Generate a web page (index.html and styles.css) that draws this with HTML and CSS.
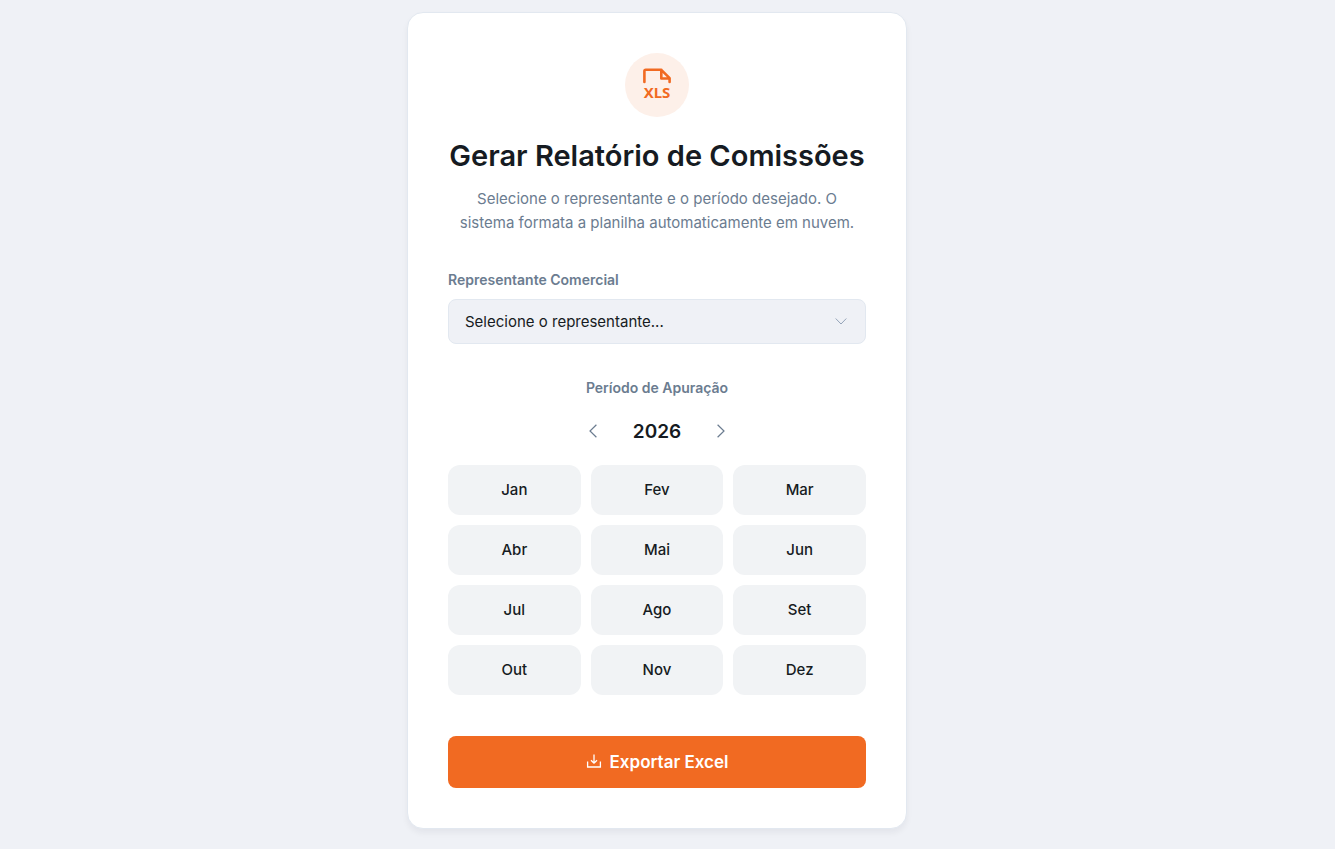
FILE: index.html
```html
<!DOCTYPE html>
<html lang="pt-BR">
<head>
<meta charset="utf-8">
<meta name="viewport" content="width=device-width, initial-scale=1">
<title>Gerar Relatório de Comissões</title>
<link rel="stylesheet" href="styles.css">
</head>
<body>
<main class="page">
  <form class="card">
    <div class="badge">
      <svg width="34" height="34" viewBox="0 0 34 34" aria-hidden="true">
        <path d="M4.400 14V3.200a1.400 1.400 0 0 1 1.400-1.400H21.300l8.300 8.300V14M21.300 1.800v8.700h8.300" fill="none" stroke="currentColor" stroke-width="2.600" stroke-linecap="round" stroke-linejoin="round"/>
        <text class="badge-text" x="17" y="30" text-anchor="middle">XLS</text>
      </svg>
    </div>
    <h1 class="title">Gerar Relatório de Comissões</h1>
    <p class="lead">Selecione o representante e o período desejado. O sistema formata a planilha automaticamente em nuvem.</p>

    <label class="label" for="rep">Representante Comercial</label>
    <div class="select-wrap">
      <select class="select" id="rep">
        <option>Selecione o representante...</option>
      </select>
      <svg class="caret" width="12" height="12" viewBox="0 0 12 12" aria-hidden="true"><path d="M.7 2.500 6 8 11.300 2.500" fill="none" stroke="currentColor"/></svg>
    </div>

    <fieldset class="period">
      <legend class="label period-label">Período de Apuração</legend>
      <div class="year-nav">
        <button class="arrow" type="button" aria-label="Ano anterior"><svg width="16" height="16" viewBox="0 0 16 16"><path d="M11.400 1.800 5 8l6.400 6.200" fill="none" stroke="currentColor" stroke-width="1.200"/></svg></button>
        <span class="year">2026</span>
        <button class="arrow" type="button" aria-label="Próximo ano"><svg width="16" height="16" viewBox="0 0 16 16"><path d="M4.600 1.800 11 8l-6.400 6.200" fill="none" stroke="currentColor" stroke-width="1.200"/></svg></button>
      </div>
      <div class="months">
        <button class="month" type="button">Jan</button>
        <button class="month" type="button">Fev</button>
        <button class="month" type="button">Mar</button>
        <button class="month" type="button">Abr</button>
        <button class="month" type="button">Mai</button>
        <button class="month" type="button">Jun</button>
        <button class="month" type="button">Jul</button>
        <button class="month" type="button">Ago</button>
        <button class="month" type="button">Set</button>
        <button class="month" type="button">Out</button>
        <button class="month" type="button">Nov</button>
        <button class="month" type="button">Dez</button>
      </div>
    </fieldset>

    <button class="export" type="button">
      <svg width="16" height="16" viewBox="0 0 16 16" aria-hidden="true"><path d="M1.600 7.500v5.500h12.800V7.500M8 .5v8.500M5 6.200 8 9.200 11 6.200" fill="none" stroke="currentColor" stroke-width="1.300"/></svg>
      Exportar Excel
    </button>
  </form>
</main>
</body>
</html>
```
FILE: styles.css
```css
* { box-sizing: border-box; }
body {
  margin: 0;
  background: #eff1f6;
  color: #161b22;
  font-family: Inter, sans-serif;
}
.page {
  display: flex;
  justify-content: center;
  padding: 12px 21px 20px 0;
}
.card {
  width: 100%;
  max-width: 500px;
  padding: 40px;
  background: #fff;
  border: 1px solid #e2e8f0;
  border-radius: 16px;
  box-shadow: 0 4px 6px rgba(15, 23, 42, 0.05);
}
.badge {
  display: flex;
  align-items: center;
  justify-content: center;
  width: 64px;
  height: 64px;
  margin: 0 auto 20px;
  border-radius: 50%;
  background: #fdf0e9;
  color: #f16a22;
}
.badge-text {
  font: 700 15px "Noto Sans", sans-serif;
  fill: currentColor;
}
.title {
  margin: 0 0 12px;
  font-size: 29px;
  font-weight: 600;
  line-height: 38px;
  text-align: center;
}
.lead {
  margin: 0 0 36px;
  color: #6b7c90;
  font-size: 15px;
  line-height: 24px;
  text-align: center;
}
.label {
  display: block;
  margin: 0 0 10px;
  padding: 0;
  color: #6b7c90;
  font-size: 14px;
  font-weight: 600;
  line-height: 18px;
}
.select-wrap { position: relative; }
.select {
  display: block;
  width: 100%;
  height: 45px;
  padding: 0 40px 0 16px;
  appearance: none;
  border: 1px solid #e2e8f0;
  border-radius: 8px;
  background: #eff1f6;
  color: inherit;
  font: 400 15px Inter, sans-serif;
}
.caret {
  position: absolute;
  top: 17px;
  right: 19px;
  color: #94a3b8;
  pointer-events: none;
}
.period {
  min-width: 0;
  margin: 35px 0 41px;
  padding: 0;
  border: 0;
}
.period-label { margin: 0 auto 18px; }
.year-nav {
  display: flex;
  align-items: center;
  justify-content: center;
  gap: 8px;
  margin-bottom: 18px;
}
.arrow {
  display: flex;
  padding: 8px;
  border: 0;
  background: none;
  color: #6b7c90;
}
.year {
  min-width: 80px;
  font-size: 19px;
  font-weight: 600;
  text-align: center;
}
.months {
  display: grid;
  grid-template-columns: repeat(3, 1fr);
  gap: 10px;
}
.month {
  height: 50px;
  padding: 0 0 1px;
  border: 0;
  border-radius: 12px;
  background: #f1f3f5;
  color: inherit;
  font: 500 15px Inter, sans-serif;
}
.export {
  display: flex;
  align-items: center;
  justify-content: center;
  gap: 8px;
  width: 100%;
  height: 52px;
  border: 0;
  border-radius: 8px;
  background: #f16a22;
  color: #fff;
  font: 600 17px Inter, sans-serif;
}
```
